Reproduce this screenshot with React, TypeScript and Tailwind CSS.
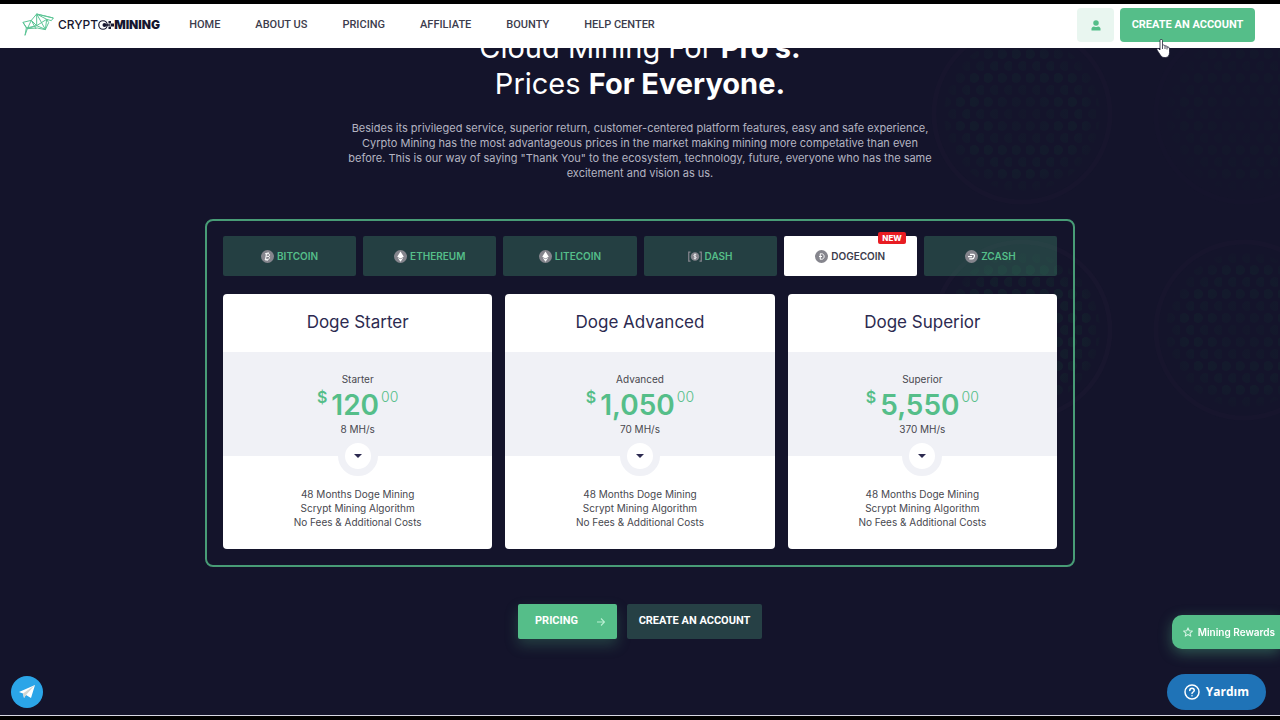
import { useState } from 'react';
import type { ReactNode } from 'react';

interface Plan {
  name: string;
  tier: string;
  price: string;
  rate: string;
}

interface Coin {
  name: string;
  icon: ReactNode;
  isNew?: boolean;
}

const NAV_LINKS = ['HOME', 'ABOUT US', 'PRICING', 'AFFILIATE', 'BOUNTY', 'HELP CENTER'];

const PLANS: Plan[] = [
  { name: 'Doge Starter', tier: 'Starter', price: '120', rate: '8 MH/s' },
  { name: 'Doge Advanced', tier: 'Advanced', price: '1,050', rate: '70 MH/s' },
  { name: 'Doge Superior', tier: 'Superior', price: '5,550', rate: '370 MH/s' },
];

const FEATURES = ['48 Months Doge Mining', 'Scrypt Mining Algorithm', 'No Fees & Additional Costs'];

function CoinIcon({ children }: { children: ReactNode }) {
  return (
    <svg className="w-[13px] h-[13px] flex-shrink-0" viewBox="0 0 26 26" fill="none" aria-hidden="true">
      <circle cx="13" cy="13" r="13" fill="#85858d" />
      {children}
    </svg>
  );
}

const bitcoinIcon = (
  <CoinIcon>
    <path
      d="M11 7l-2 12M8 7.500h6.500c4 0 3.500 5 0 5.200H10.500M14 12.700c4.500 0 3.500 6-.5 6H7.500M12.500 5l-.5 2.500M15 5l-.5 2.500M10.500 19l-.5 2.500M13 19l-.5 2.500"
      stroke="#fff"
      strokeWidth="2"
    />
  </CoinIcon>
);

const diamondIcon = (
  <CoinIcon>
    <path d="M13 3l6.500 10.500-6.500 3.500-6.500-3.500z" fill="#fff" />
    <path d="M7.500 15.500l5.500 3 5.500-3L13 23.500z" fill="#fff" />
  </CoinIcon>
);

const dashIcon = (
  <svg className="w-[14px] h-[11px] flex-shrink-0" viewBox="0 0 28 22" fill="none" aria-hidden="true">
    <path d="M5 2H1.500v18H5M23 2h3.500v18H23" stroke="#85858d" strokeWidth="2.500" />
    <circle cx="14" cy="11" r="8.500" fill="#85858d" />
    <path d="M16.500 7.500c-5-2-6.500 2.500-2.500 3.500s3 5-2.500 3.500M14 5v12" stroke="#fff" strokeWidth="1.500" />
  </svg>
);

const dogeIcon = (
  <CoinIcon>
    <path d="M10.500 7.500h2.500c7 0 7 11 0 11h-2.500zM8 13h6" stroke="#fff" strokeWidth="2" />
  </CoinIcon>
);

const zcashIcon = (
  <CoinIcon>
    <path d="M10 8.500h6.500c4 0 2.500 9-2 9H8.500M6 13h8" stroke="#fff" strokeWidth="2.500" />
  </CoinIcon>
);

const COINS: Coin[] = [
  { name: 'BITCOIN', icon: bitcoinIcon },
  { name: 'ETHEREUM', icon: diamondIcon },
  { name: 'LITECOIN', icon: diamondIcon },
  { name: 'DASH', icon: dashIcon },
  { name: 'DOGECOIN', icon: dogeIcon, isNew: true },
  { name: 'ZCASH', icon: zcashIcon },
];

function Logo() {
  return (
    <a href="#" className="flex items-center gap-1 text-xs text-[#17172f]" aria-label="Crypto Mining">
      <svg className="w-8 h-6" viewBox="0 0 96 72" fill="none" stroke="#5dc596" strokeWidth="3" strokeLinejoin="round">
        <path d="M3 28l25-6L44 3l50 12-6 8-14-4 6 10-10 21-24-5-30 2-7 20 4-22z" />
        <path d="M44 3l26 46M44 3v35M28 22l16 16 30-19L44 3M3 28l13 19 28-9 26 11M28 22L16 47M28 22l14 26M74 19l-4 31M44 3l50 12M13 45l31-7" />
      </svg>
      <span className="flex items-center">
        <span className="font-medium">CRYPT</span>
        <svg className="w-[16px] h-[12px]" viewBox="0 0 32 24" fill="none">
          <circle cx="10" cy="12" r="8.500" stroke="#17172f" strokeWidth="2.400" />
          <path d="M11 12h14" stroke="#17172f" strokeWidth="3" />
          <circle cx="13" cy="12" r="4" fill="#17172f" />
          <path d="M21 4h5v5h-5zM21 15h5v5h-5zM26 9h6v6h-6z" fill="#17172f" />
        </svg>
        <span className="font-black">MINING</span>
      </span>
    </a>
  );
}

function Header() {
  return (
    <header className="relative z-10 flex items-center h-11 pl-[22px] pr-[25px] pb-[2px] bg-white">
      <Logo />
      <nav className="flex-1 flex items-center gap-[35px] ml-[29px] font-[Roboto,sans-serif] text-[11px] font-medium text-[#3c3c4c]">
        {NAV_LINKS.map((label) => (
          <a key={label} href="#">
            {label}
          </a>
        ))}
      </nav>
      <div className="flex gap-[6px]">
        <button className="flex items-center justify-center w-[37px] h-[34px] rounded-sm bg-[#e9f6f0]" aria-label="Log in">
          <svg className="w-[10px] h-[11px]" viewBox="0 0 20 22" fill="#55be89">
            <circle cx="10" cy="6" r="5.500" />
            <path d="M1 21c-1-6 2-8 5-8 3 1.500 5 1.500 8 0 3 0 6 2 5 8z" />
          </svg>
        </button>
        <button className="w-[135px] h-[34px] rounded-sm bg-[#55be89] font-[Roboto,sans-serif] text-[11px] font-bold text-white">
          CREATE AN ACCOUNT
        </button>
      </div>
    </header>
  );
}

// Faint mining rig fans behind the right side of the page
function FanBackdrop() {
  const fans = [
    { x: 122, y: 66, opacity: 0.6 },
    { x: 344, y: 66, opacity: 0.3 },
    { x: 122, y: 282, opacity: 0.9 },
    { x: 344, y: 282, opacity: 0.6 },
  ];

  return (
    <svg className="absolute top-0 right-0 w-[380px] h-[500px] pointer-events-none" viewBox="0 0 380 500" aria-hidden="true">
      <defs>
        <pattern id="cells" width="14" height="24" patternUnits="userSpaceOnUse">
          <circle cx="4" cy="6" r="5" fill="#13262f" />
          <circle cx="11" cy="18" r="5" fill="#13222e" />
        </pattern>
        <radialGradient id="fade">
          <stop offset="0" stopColor="#14142b" stopOpacity="0.7" />
          <stop offset="0.7" stopColor="#14142b" stopOpacity="0.3" />
          <stop offset="1" stopColor="#14142b" stopOpacity="0.8" />
        </radialGradient>
      </defs>
      {fans.map((fan) => (
        <g key={`${fan.x}-${fan.y}`} opacity={fan.opacity}>
          <circle cx={fan.x} cy={fan.y} r="88" fill="none" stroke="#19172f" strokeWidth="5" />
          <circle cx={fan.x} cy={fan.y} r="78" fill="url(#cells)" />
          <circle cx={fan.x} cy={fan.y} r="80" fill="url(#fade)" />
        </g>
      ))}
    </svg>
  );
}

function CoinTabs({ active, onSelect }: { active: string; onSelect: (name: string) => void }) {
  return (
    <div className="grid grid-cols-6 gap-[7px]">
      {COINS.map((coin) => (
        <button
          key={coin.name}
          onClick={() => onSelect(coin.name)}
          className={`relative flex items-center justify-center gap-[3px] h-10 rounded-xs text-[10px] font-semibold ${
            coin.name === active ? 'bg-white text-[#3c3c4c]' : 'bg-[#55be89]/25 text-[#55be89]'
          }`}
        >
          {coin.icon}
          {coin.name}
          {coin.isNew && (
            <span className="absolute -top-1 right-[11px] px-[4px] rounded-xs bg-[#e81c22] text-[8px] leading-3 font-extrabold text-white">
              NEW
            </span>
          )}
        </button>
      ))}
    </div>
  );
}

function PlanCard({ plan }: { plan: Plan }) {
  return (
    <article className="rounded-sm bg-white text-center text-[10px] text-[#48484f] overflow-hidden">
      <h3 className="h-[58px] text-[17px] leading-[56px] text-[#2c2a50]">{plan.name}</h3>
      <div className="relative h-[104px] pt-[19px] bg-[#f0f1f6]">
        <p className="leading-4">{plan.tier}</p>
        <p className="flex items-start justify-center h-[34px] text-[#55be89]">
          <span className="mr-1 text-base leading-5 font-semibold">$</span>
          <span className="text-[28px] leading-[36px] font-semibold">{plan.price}</span>
          <span className="ml-[2px] text-sm leading-5 font-light">00</span>
        </p>
        <p className="leading-4">{plan.rate}</p>
        <button
          className="absolute left-1/2 -bottom-5 -translate-x-1/2 flex items-center justify-center w-10 h-10 rounded-full border-[7px] border-[#f0f1f6] bg-white"
          aria-label={`Show ${plan.name} details`}
        >
          <svg className="w-2 h-1" viewBox="0 0 8 4" fill="#2c2a50">
            <path d="M0 0h8L4 4z" />
          </svg>
        </button>
      </div>
      <ul className="pt-[31px] pb-5 leading-[14px]">
        {FEATURES.map((feature) => (
          <li key={feature}>{feature}</li>
        ))}
      </ul>
    </article>
  );
}

function FloatingLinks() {
  return (
    <>
      <a
        href="#"
        className="fixed left-[11px] bottom-3 flex items-center justify-center w-8 h-8 rounded-full bg-[#2ba5e8]"
        aria-label="Telegram"
      >
        <svg className="w-4 h-[14px]" viewBox="0 0 32 28">
          <path d="M0 14L32 0 24 26 14 20l-4 6-2-9z" fill="#fff" />
          <path d="M8 17L32 0 14 20l-4 6z" fill="#d3d6d2" />
        </svg>
      </a>
      <a
        href="#"
        className="fixed right-0 bottom-[71px] flex items-center gap-[5px] h-[34px] pl-[11px] pr-[5px] rounded-l-[10px] bg-[#55be89] text-[10px] font-semibold text-white shadow-[0_4px_14px_#55be8966]"
      >
        <svg className="w-[10px] h-[10px]" viewBox="0 0 24 24" fill="none" stroke="#d5f3e4" strokeWidth="2.500" strokeLinejoin="round">
          <path d="M12 2l3 7 7.500.700-5.700 5 1.800 7.300L12 18l-6.600 4 1.800-7.300-5.700-5L9 9z" />
        </svg>
        Mining Rewards
      </a>
      <button className="fixed right-[14px] bottom-[10px] flex items-center gap-[6px] h-9 px-[17px] rounded-full bg-[#1f73b7] font-['Open_Sans',sans-serif] text-xs font-bold text-white">
        <svg className="w-4 h-4" viewBox="0 0 32 32" fill="none" stroke="#fff" strokeWidth="3" strokeLinecap="round">
          <circle cx="16" cy="16" r="14" />
          <path d="M11.500 13c0-6 9-6 9 0 0 3-4.500 3-4.500 6" />
          <path d="M16 23.500v.1" />
        </svg>
        Yardım
      </button>
    </>
  );
}

function PointerCursor() {
  return (
    <svg className="absolute z-20 top-[35px] right-[110px] w-[14px] h-[19px] pointer-events-none" viewBox="0 0 28 38" aria-hidden="true">
      <path
        d="M8 3c0-3 5-3 5 0v10c2-2 4-1 5 1 2-1 4 0 4 2 3-1 5 1 5 4v7c0 6-3 10-8 10h-3c-4 0-6-3-8-6l-6-9c-1-3 2-4 4-2l2 2z"
        fill="#fff"
        stroke="#17172f"
        strokeWidth="1.500"
      />
      <path d="M13 13v7M18 14v6M22 16v5" stroke="#17172f" strokeWidth="1.500" />
    </svg>
  );
}

export default function App() {
  const [coin, setCoin] = useState('DOGECOIN');

  return (
    <div className="relative flex flex-col min-h-screen border-t-4 border-b-4 border-black bg-[#14142b] font-[Inter,sans-serif]">
      <Header />
      <PointerCursor />

      <main className="relative flex-1 flex flex-col items-center border-b border-[#d8d8e4]">
        <FanBackdrop />

        <h1 className="-mt-[18px] text-[29px] leading-[36px] text-center text-white">
          Cloud Mining For <b>Pro’s.</b>
          <br />
          Prices <b>For Everyone.</b>
        </h1>
        <p className="mt-[19px] text-[11px] leading-[15px] text-center text-[#b4b4c2]">
          Besides its privileged service, superior return, customer-centered platform features, easy and safe experience,
          <br />
          Cyrpto Mining has the most advantageous prices in the market making mining more competative than even
          <br />
          before. This is our way of saying "Thank You" to the ecosystem, technology, future, everyone who has the same
          <br />
          excitement and vision as us.
        </p>

        <section className="relative w-full max-w-[870px] mt-[38px] px-4 pt-[15px] pb-4 border-2 border-[#55be89]/80 rounded-lg">
          <CoinTabs active={coin} onSelect={setCoin} />
          <div className="grid grid-cols-3 gap-[13px] mt-[18px]">
            {PLANS.map((plan) => (
              <PlanCard key={plan.name} plan={plan} />
            ))}
          </div>
        </section>

        <div className="relative flex gap-[10px] mt-[37px] font-[Roboto,sans-serif] text-[11px] font-bold text-white">
          <a
            href="#"
            className="flex items-center justify-between w-[99px] h-[35px] pl-[17px] pr-3 rounded-xs bg-[#55be89] shadow-[0_6px_14px_#55be8940]"
          >
            PRICING
            <svg className="w-2 h-2" viewBox="0 0 16 16" fill="none" stroke="#b9efd2" strokeWidth="2.200">
              <path d="M0 8h15M8 1l7 7-7 7" />
            </svg>
          </a>
          <button className="w-[135px] h-[35px] rounded-xs bg-[#264045]">CREATE AN ACCOUNT</button>
        </div>
      </main>

      <FloatingLinks />
    </div>
  );
}
